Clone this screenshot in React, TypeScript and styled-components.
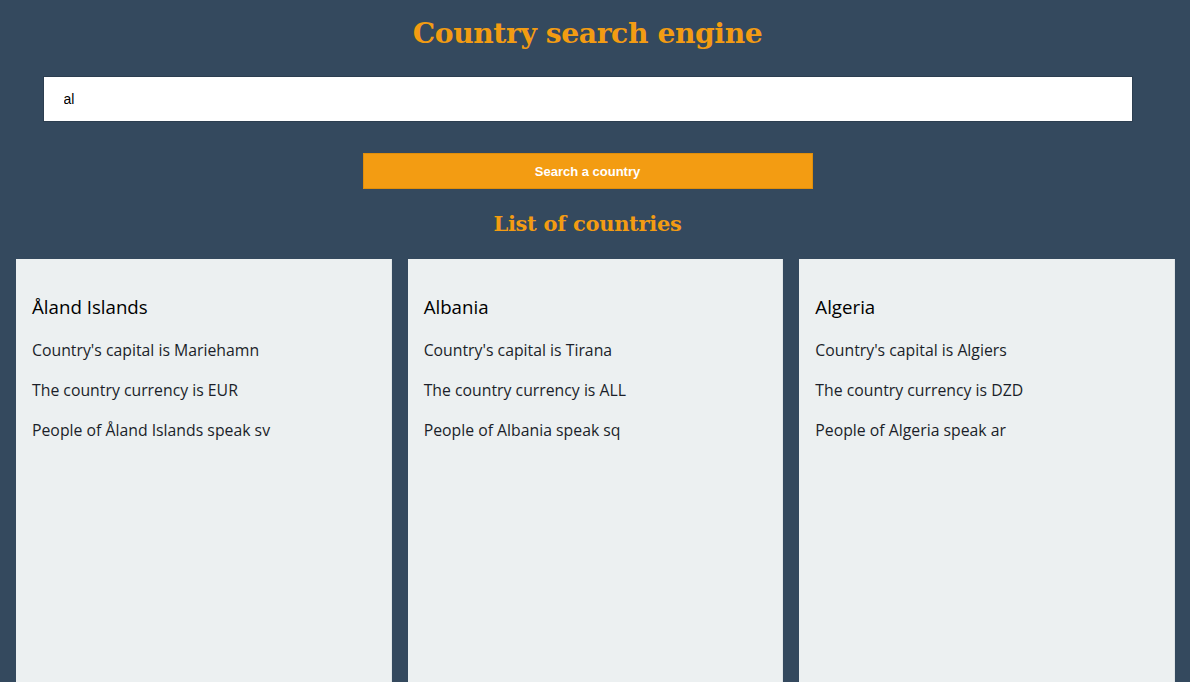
import React, { useState } from "react";
import styled, { createGlobalStyle } from "styled-components";

const Global = createGlobalStyle`
  html, body { margin: 0; padding: 0; background: #34495e; }
  body { font-family: "Open Sans", sans-serif; }
  * { box-sizing: border-box; }
`;

const Page = styled.div`
  display: flex;
  flex-direction: column;
  align-items: center;
  background: #34495e;
  min-height: 682px;
  padding-right: 15px;
`;

const Title = styled.h1`
  margin: 12px 0 0;
  font-family: "DejaVu Serif", serif;
  font-weight: bold;
  font-size: 28.2px;
  line-height: 44px;
  color: #f39c12;
  letter-spacing: -0.4px;
`;

const SearchInput = styled.input`
  margin-top: 20px;
  width: 1090px;
  height: 46px;
  border: 1px solid #2c3e50;
  background: #fff;
  padding: 0 20px;
  font-family: "Liberation Sans", Arial, sans-serif;
  font-size: 14px;
  color: #000;
  outline: none;
`;

const Button = styled.button`
  margin-top: 31px;
  width: 450px;
  height: 36px;
  border: 1px solid #e08e0b;
  background: #f39c12;
  color: #fff;
  font-family: "Liberation Sans", Arial, sans-serif;
  font-weight: bold;
  font-size: 13px;
  cursor: pointer;
`;

const SubTitle = styled.h2`
  margin: 18px 0 0;
  font-family: "DejaVu Serif", serif;
  font-weight: bold;
  font-size: 21px;
  line-height: 34px;
  color: #f39c12;
  letter-spacing: -0.3px;
`;

const Grid = styled.div`
  display: grid;
  grid-template-columns: repeat(3, 1fr);
  gap: 16px;
  width: 100%;
  padding: 18px 0 0 16px;
`;

const Card = styled.div`
  background: #ecf0f1;
  min-height: 460px;
  padding: 34px 16px 16px;
  border-right: 1px solid #dfe4e6;
`;

const CardTitle = styled.h3`
  margin: 0 0 9px;
  font-family: "Open Sans", sans-serif;
  font-weight: normal;
  font-size: 18.7px;
  line-height: 28px;
  color: #000;
`;

const Line = styled.p`
  margin: 0;
  font-family: "Open Sans", sans-serif;
  font-size: 15.8px;
  line-height: 40px;
  color: #1b1f2a;
`;

const countries = [
  { name: "Åland Islands", capital: "Mariehamn", currency: "EUR", lang: "sv" },
  { name: "Albania", capital: "Tirana", currency: "ALL", lang: "sq" },
  { name: "Algeria", capital: "Algiers", currency: "DZD", lang: "ar" },
];

export default function App() {
  const [q, setQ] = useState("al");
  return (
    <Page>
      <Global />
      <Title>Country search engine</Title>
      <SearchInput value={q} onChange={(e) => setQ(e.target.value)} />
      <Button>Search a country</Button>
      <SubTitle>List of countries</SubTitle>
      <Grid>
        {countries.map((c) => (
          <Card key={c.name}>
            <CardTitle>{c.name}</CardTitle>
            <Line>Country's capital is {c.capital}</Line>
            <Line>The country currency is {c.currency}</Line>
            <Line>People of {c.name} speak {c.lang}</Line>
          </Card>
        ))}
      </Grid>
    </Page>
  );
}
